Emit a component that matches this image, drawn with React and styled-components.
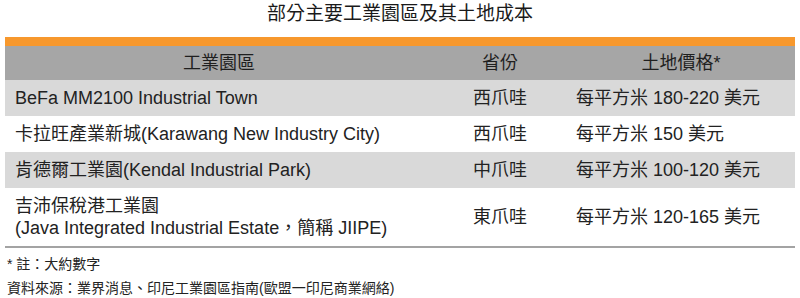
import React from "react";
import styled, { createGlobalStyle } from "styled-components";

const GlobalStyle = createGlobalStyle`
  body {
    margin: 0;
    background: #ffffff;
    font-family: "Liberation Sans", "Noto Sans CJK TC", sans-serif;
    color: #222222;
  }
`;

const Page = styled.div`
  width: 800px;
  padding: 0 5px;
  box-sizing: border-box;
`;

const Title = styled.div`
  height: 37px;
  padding-top: 3px;
  box-sizing: border-box;
  text-align: center;
  font-size: 19px;
  line-height: 22px;
  color: #1a1a1a;
`;

const Table = styled.table`
  width: 790px;
  border-collapse: collapse;
  table-layout: fixed;
  border-top: 9px solid #f7982d;
  border-bottom: 2px solid #a3a3a3;
  font-size: 18px;
  line-height: 22px;
`;

const HeadRow = styled.tr`
  background: #a6a6a6;
`;

const HeadCell = styled.th`
  font-weight: normal;
  text-align: center;
  padding: 6px 0;
  color: #1f1f1f;
`;

const Row = styled.tr`
  background: ${(props) => (props.shaded ? "#d9d9d9" : "#ffffff")};
`;

const Cell = styled.td`
  padding: 7px 0 7px ${(props) => props.indent || 0}px;
  text-align: ${(props) => (props.center ? "center" : "left")};
  vertical-align: middle;
`;

const Notes = styled.div`
  margin-top: 4px;
  padding-left: 2px;
  font-size: 14px;
  line-height: 24px;
  color: #222222;
`;

const rows = [
  { name: ["BeFa MM2100 Industrial Town"], prov: "西爪哇", price: "每平方米 180-220 美元" },
  { name: ["卡拉旺產業新城(Karawang New Industry City)"], prov: "西爪哇", price: "每平方米 150 美元" },
  { name: ["肯德爾工業園(Kendal Industrial Park)"], prov: "中爪哇", price: "每平方米 100-120 美元" },
  {
    name: ["吉沛保稅港工業園", "(Java Integrated Industrial Estate，簡稱 JIIPE)"],
    prov: "東爪哇",
    price: "每平方米 120-165 美元",
  },
];

export default function App() {
  return (
    <>
      <GlobalStyle />
      <Page>
        <Title>部分主要工業園區及其土地成本</Title>
        <Table>
          <colgroup>
            <col style={{ width: 428 }} />
            <col style={{ width: 134 }} />
            <col style={{ width: 228 }} />
          </colgroup>
          <thead>
            <HeadRow>
              <HeadCell>工業園區</HeadCell>
              <HeadCell>省份</HeadCell>
              <HeadCell>土地價格*</HeadCell>
            </HeadRow>
          </thead>
          <tbody>
            {rows.map((r, i) => (
              <Row key={i} shaded={i % 2 === 0}>
                <Cell indent={10}>
                  {r.name.map((line, j) => (
                    <div key={j}>{line}</div>
                  ))}
                </Cell>
                <Cell center>{r.prov}</Cell>
                <Cell indent={9}>{r.price}</Cell>
              </Row>
            ))}
          </tbody>
        </Table>
        <Notes>
          <div>* 註：大約數字</div>
          <div>資料來源：業界消息、印尼工業園區指南(歐盟一印尼商業網絡)</div>
        </Notes>
      </Page>
    </>
  );
}
